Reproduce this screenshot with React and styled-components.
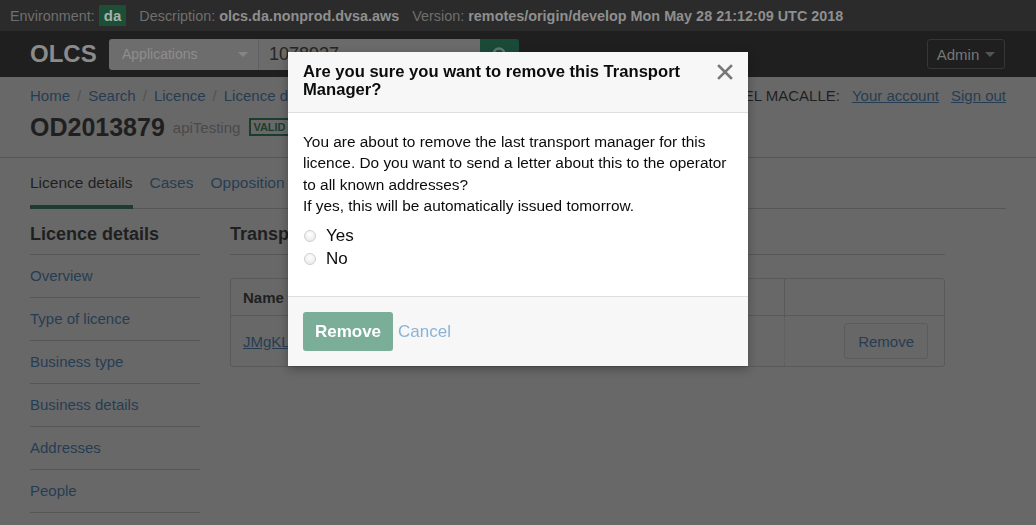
import React from 'react';
import styled, { createGlobalStyle } from 'styled-components';

const Global = createGlobalStyle`
  html, body {
    margin: 0;
    padding: 0;
    background: #ffffff;
    font-family: "Liberation Sans", Arial, sans-serif;
    color: #0b0c0c;
  }
  * { box-sizing: border-box; }
`;

const LINK = '#1d70b8';

// environment strip
const EnvBar = styled.div`
  position: relative;
  z-index: 20;
  height: 31px;
  background: #2b2b2b;
  display: flex;
  align-items: center;
  padding: 0 10px;
  font-size: 14.4px;
  color: #6f6f6f;
  white-space: nowrap;
`;

const EnvItem = styled.span`
  display: flex;
  align-items: center;
  margin-right: 13px;
`;

const EnvValue = styled.b`
  color: #8f8f8f;
  margin-left: 4px;
`;

const EnvBadge = styled.span`
  background: #1d4f37;
  color: #a3b2ab;
  font-weight: bold;
  font-size: 15px;
  padding: 2px 5px;
  margin-left: 4px;
  line-height: 17px;
`;

// dark header
const Header = styled.div`
  position: relative;
  z-index: 20;
  height: 46px;
  background: #1f1f1f;
  display: flex;
  align-items: center;
  padding: 0 30px;
`;

const Logo = styled.div`
  font-size: 24px;
  font-weight: bold;
  color: #8b8b8b;
  width: 79px;
`;

const SearchForm = styled.div`
  display: flex;
  height: 31px;
`;

const SearchSelect = styled.div`
  width: 150px;
  background: #6d6d6d;
  border-radius: 3px 0 0 3px;
  display: flex;
  align-items: center;
  justify-content: space-between;
  padding: 0 10px 0 13px;
  font-size: 14px;
  color: #8e8e8e;
  border-right: 1px solid #5f5f5f;
`;

const Caret = styled.span`
  width: 0;
  height: 0;
  border-left: 5px solid transparent;
  border-right: 5px solid transparent;
  border-top: 5px solid ${(p) => p.color || '#858585'};
  margin-left: ${(p) => p.gap || 0}px;
`;

const SearchInput = styled.div`
  width: 221px;
  background: #6b6b6b;
  display: flex;
  align-items: center;
  padding: 0 10px;
  font-size: 18px;
  color: #262626;
`;

const SearchButton = styled.div`
  width: 39px;
  background: #1c4a38;
  border-radius: 0 3px 3px 0;
  display: flex;
  justify-content: center;
  padding-top: 7px;
`;

const AdminButton = styled.div`
  margin-left: auto;
  margin-right: 1px;
  height: 30px;
  width: 78px;
  border: 1px solid #363636;
  border-radius: 3px;
  display: flex;
  align-items: center;
  justify-content: center;
  font-size: 15px;
  color: #777;
`;

// page beneath the dialog
const Page = styled.div`
  background: #ffffff;
`;

const Masthead = styled.div`
  padding: 9px 30px 0;
  border-bottom: 1px solid #bfc1c3;
  height: 81px;
`;

const TopRow = styled.div`
  display: flex;
  justify-content: space-between;
  align-items: center;
  height: 18px;
  font-size: 15px;
`;

const Crumbs = styled.div`
  display: flex;
  gap: 7px;
  color: #b1b4b6;
`;

const Crumb = styled.span`
  color: ${LINK};
`;

const UserLinks = styled.div`
  display: flex;
  gap: 12px;
  color: #0b0c0c;
`;

const UnderLink = styled.span`
  color: ${LINK};
  text-decoration: underline;
`;

const TitleRow = styled.div`
  display: flex;
  align-items: center;
  margin-top: 8px;
  height: 30px;
`;

const Title = styled.h1`
  margin: 0;
  font-size: 25px;
  font-weight: bold;
  color: #0b0c0c;
`;

const SubTitle = styled.span`
  margin-left: 8px;
  font-size: 15px;
  color: #999;
`;

const Tag = styled.span`
  margin-left: 9px;
  border: 2px solid #00703c;
  color: #00703c;
  font-size: 11px;
  font-weight: bold;
  padding: 1px 2px;
  line-height: 12px;
`;

const Tabs = styled.div`
  display: flex;
  gap: 17px;
  margin: 0 30px;
  border-bottom: 1px solid #bfc1c3;
`;

const Tab = styled.div`
  padding-top: 16px;
  height: 51px;
  font-size: 15.5px;
  line-height: 18px;
  color: ${(p) => (p.active ? '#0b0c0c' : LINK)};
  border-bottom: 4px solid ${(p) => (p.active ? '#00703c' : 'transparent')};
  margin-bottom: -1px;
`;

const Columns = styled.div`
  display: flex;
  gap: 30px;
  padding: 0 30px;
`;

const Sidebar = styled.div`
  width: 170px;
`;

const SectionTitle = styled.h2`
  margin: 0;
  padding: 14px 0 9px;
  font-size: 18px;
  line-height: 22px;
  font-weight: bold;
  color: #0b0c0c;
  border-bottom: 1px solid #bfc1c3;
`;

const NavItem = styled.div`
  padding: 11px 0;
  line-height: 20px;
  font-size: 15px;
  color: ${LINK};
  border-bottom: 1px solid #bfc1c3;
`;

const Main = styled.div`
  width: 715px;
`;

const Table = styled.div`
  margin-top: 23px;
  border: 1px solid #ccc;
  border-radius: 3px;
`;

const Row = styled.div`
  display: grid;
  grid-template-columns: 1fr 160px;
  height: ${(p) => (p.head ? 36 : 51)}px;
  border-top: ${(p) => (p.head ? 'none' : '1px solid #ccc')};
`;

const Cell = styled.div`
  display: flex;
  align-items: center;
  justify-content: ${(p) => (p.end ? 'flex-end' : 'flex-start')};
  padding: 0 16px 0 12px;
  font-size: 15px;
  font-weight: ${(p) => (p.head ? 'bold' : 'normal')};
  border-left: ${(p) => (p.end ? `1px ${p.head ? 'solid' : 'dotted'} #ccc` : 'none')};
`;

const GhostButton = styled.div`
  height: 36px;
  padding: 0 13px;
  display: flex;
  align-items: center;
  border: 1px solid #d3d3d3;
  border-radius: 3px;
  background: #fafafa;
  color: ${LINK};
  font-size: 15px;
`;

// dialog
const Backdrop = styled.div`
  position: fixed;
  inset: 0;
  z-index: 10;
  background: rgba(40, 40, 40, 0.7);
`;

const DialogLayer = styled.div`
  position: fixed;
  inset: 0;
  z-index: 30;
  display: flex;
  justify-content: center;
  align-items: flex-start;
  padding-top: 52px;
`;

const Dialog = styled.div`
  width: 460px;
  background: #fff;
  box-shadow: 0 3px 9px rgba(0, 0, 0, 0.3);
`;

const DialogHead = styled.div`
  display: flex;
  justify-content: space-between;
  align-items: flex-start;
  background: #f7f7f7;
  border-bottom: 1px solid #dedede;
  padding: 11px 15px 13px 15px;
`;

const DialogTitle = styled.h3`
  margin: 0;
  width: 390px;
  font-size: 16.6px;
  line-height: 18px;
  font-weight: bold;
  color: #0b0c0c;
`;

const Close = styled.div`
  margin-top: 1px;
  line-height: 0;
`;

const DialogBody = styled.div`
  padding: 18px 15px 26px;
`;

const Para = styled.p`
  margin: 0;
  font-size: 15.4px;
  line-height: 21.3px;
  color: #0b0c0c;
`;

const Options = styled.div`
  margin-top: 8px;
`;

const Option = styled.label`
  display: flex;
  align-items: center;
  height: 23px;
  font-size: 17px;
  color: #0b0c0c;
`;

const Radio = styled.input`
  appearance: none;
  margin: 0 10px 0 1px;
  width: 12px;
  height: 12px;
  border-radius: 50%;
  border: 1px solid #cfcfcf;
  background: radial-gradient(circle at 50% 35%, #ffffff 0%, #e6e6e6 100%);
`;

const DialogFoot = styled.div`
  display: flex;
  align-items: center;
  gap: 5px;
  background: #f7f7f7;
  border-top: 1px solid #dedede;
  padding: 15px;
`;

const PrimaryButton = styled.div`
  height: 39px;
  width: 90px;
  border-radius: 3px;
  background: #7aae98;
  color: #fff;
  font-size: 17px;
  font-weight: bold;
  display: flex;
  align-items: center;
  justify-content: center;
`;

const CancelLink = styled.span`
  font-size: 17px;
  color: #8ab4d6;
`;

const breadcrumbs = ['Home', 'Search', 'Licence', 'Licence details'];
const navItems = ['Overview', 'Type of licence', 'Business type', 'Business details', 'Addresses', 'People'];
const tabs = ['Licence details', 'Cases', 'Opposition'];

export default function App() {
  return (
    <>
      <Global />
      <EnvBar>
        <EnvItem>Environment:<EnvBadge>da</EnvBadge></EnvItem>
        <EnvItem>Description:<EnvValue>olcs.da.nonprod.dvsa.aws</EnvValue></EnvItem>
        <EnvItem>Version:<EnvValue>remotes/origin/develop Mon May 28 21:12:09 UTC 2018</EnvValue></EnvItem>
      </EnvBar>
      <Header>
        <Logo>OLCS</Logo>
        <SearchForm>
          <SearchSelect>
            Applications
            <Caret />
          </SearchSelect>
          <SearchInput>1078937</SearchInput>
          <SearchButton>
            <svg width="18" height="18" viewBox="0 0 18 18">
              <circle cx="8" cy="8" r="5.5" fill="none" stroke="#5e7a6e" strokeWidth="2.5" />
              <line x1="12" y1="12" x2="16" y2="16" stroke="#5e7a6e" strokeWidth="2.5" />
            </svg>
          </SearchButton>
        </SearchForm>
        <AdminButton>
          Admin
          <Caret color="#555" gap={6} />
        </AdminButton>
      </Header>

      <Page>
        <Masthead>
          <TopRow>
            <Crumbs>
              {breadcrumbs.map((c, i) => (
                <React.Fragment key={c}>
                  {i > 0 && <span>/</span>}
                  <Crumb>{c}</Crumb>
                </React.Fragment>
              ))}
            </Crumbs>
            <UserLinks>
              <span>SAMUEL MACALLE:</span>
              <UnderLink>Your account</UnderLink>
              <UnderLink>Sign out</UnderLink>
            </UserLinks>
          </TopRow>
          <TitleRow>
            <Title>OD2013879</Title>
            <SubTitle>apiTesting</SubTitle>
            <Tag>VALID</Tag>
          </TitleRow>
        </Masthead>

        <Tabs>
          {tabs.map((t, i) => (
            <Tab key={t} active={i === 0}>{t}</Tab>
          ))}
        </Tabs>

        <Columns>
          <Sidebar>
            <SectionTitle>Licence details</SectionTitle>
            {navItems.map((n) => (
              <NavItem key={n}>{n}</NavItem>
            ))}
          </Sidebar>
          <Main>
            <SectionTitle>Transport managers</SectionTitle>
            <Table>
              <Row head>
                <Cell head>Name</Cell>
                <Cell head end />
              </Row>
              <Row>
                <Cell><UnderLink>JMgKLwlQ Tester</UnderLink></Cell>
                <Cell end>
                  <GhostButton>Remove</GhostButton>
                </Cell>
              </Row>
            </Table>
          </Main>
        </Columns>
      </Page>

      <Backdrop />
      <DialogLayer>
        <Dialog>
          <DialogHead>
            <DialogTitle>Are you sure you want to remove this Transport Manager?</DialogTitle>
            <Close>
              <svg width="16" height="16" viewBox="0 0 16 16">
                <path d="M2 2 L14 14 M14 2 L2 14" stroke="#777" strokeWidth="2.6" strokeLinecap="square" />
              </svg>
            </Close>
          </DialogHead>
          <DialogBody>
            <Para>
              You are about to remove the last transport manager for this licence. Do you want to send a
              letter about this to the operator to all known addresses?
              <br />
              If yes, this will be automatically issued tomorrow.
            </Para>
            <Options>
              <Option><Radio type="radio" name="letter" />Yes</Option>
              <Option><Radio type="radio" name="letter" />No</Option>
            </Options>
          </DialogBody>
          <DialogFoot>
            <PrimaryButton>Remove</PrimaryButton>
            <CancelLink>Cancel</CancelLink>
          </DialogFoot>
        </Dialog>
      </DialogLayer>
    </>
  );
}
